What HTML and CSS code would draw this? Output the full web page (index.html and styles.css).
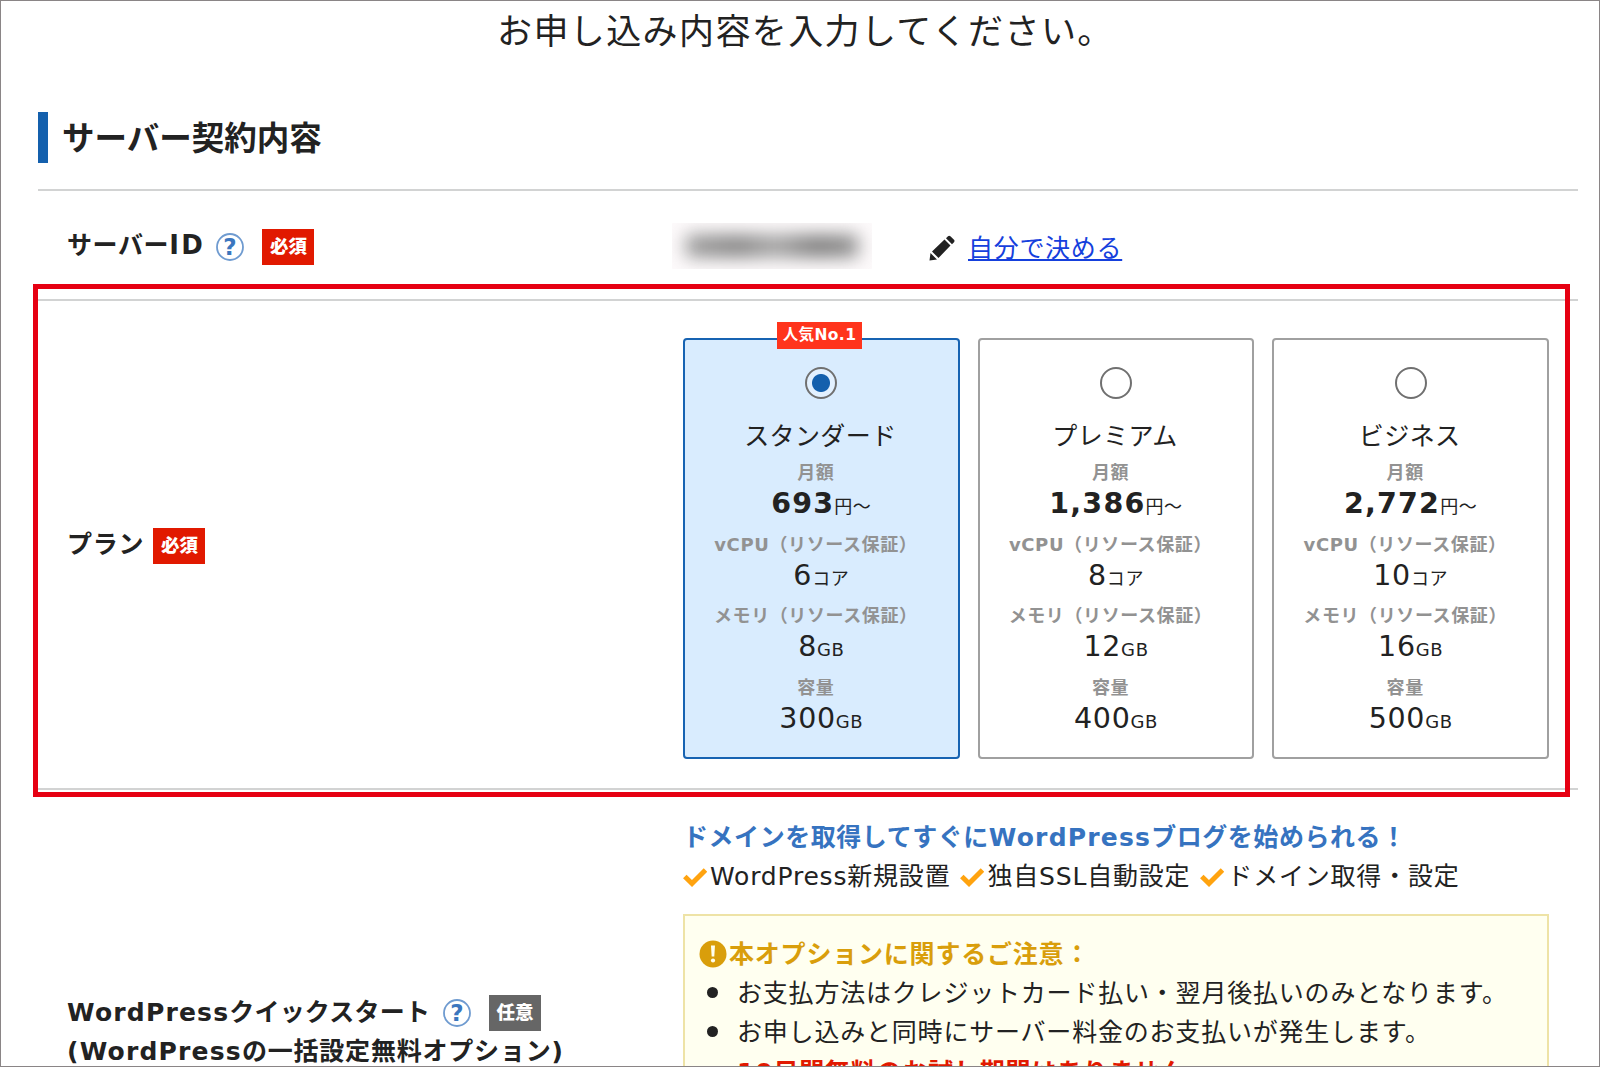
FILE: index.html
```html
<!DOCTYPE html>
<html lang="ja">
<head>
<meta charset="utf-8">
<title>お申し込み内容</title>
<link rel="stylesheet" href="styles.css">
</head>
<body>
<main class="page">
  <h1 class="lead">お申し込み内容を入力してください。</h1>
  <h2 class="section-title">サーバー契約内容</h2>

  <div class="row row-id">
    <div class="label"><span class="t-id">サーバー<span class="latin">ID</span></span>
      <svg class="help" viewBox="0 0 30 30"><circle cx="15" cy="15" r="13" fill="#fff" stroke="#6f9bd0" stroke-width="1.8"/><text x="15" y="23" text-anchor="middle">?</text></svg>
      <span class="tag">必須</span>
    </div>
    <div class="field id-field">
      <span class="masked"><i></i></span>
      <svg class="pencil" viewBox="0 0 26 26"><path d="M.5 25.500l1-7.500 6.500 6.500zM3 16.500L15.500 4.500l6 6L9.500 23zM17 3.200L19 1.200q1.200-1 2.400 0l3.600 3.600q1 1.200 0 2.400L23 9.200z" fill="#222"/></svg>
      <a class="link" href="#">自分で決める</a>
    </div>
  </div>

  <div class="row row-plan">
    <div class="label"><span class="t-plan">プラン</span><span class="tag">必須</span></div>
    <div class="field plans">
      <div class="plan selected">
        <span class="popular">人気No.1</span>
        <span class="radio"></span>
        <p class="name">スタンダード</p>
        <dl>
          <dt>月額</dt><dd><b>693</b><small>円～</small></dd>
          <dt>vCPU（リソース保証）</dt><dd>6<small>コア</small></dd>
          <dt>メモリ（リソース保証）</dt><dd>8<small>GB</small></dd>
          <dt>容量</dt><dd>300<small>GB</small></dd>
        </dl>
      </div>
      <div class="plan">
        <span class="radio"></span>
        <p class="name">プレミアム</p>
        <dl>
          <dt>月額</dt><dd><b>1,386</b><small>円～</small></dd>
          <dt>vCPU（リソース保証）</dt><dd>8<small>コア</small></dd>
          <dt>メモリ（リソース保証）</dt><dd>12<small>GB</small></dd>
          <dt>容量</dt><dd>400<small>GB</small></dd>
        </dl>
      </div>
      <div class="plan">
        <span class="radio"></span>
        <p class="name">ビジネス</p>
        <dl>
          <dt>月額</dt><dd><b>2,772</b><small>円～</small></dd>
          <dt>vCPU（リソース保証）</dt><dd>10<small>コア</small></dd>
          <dt>メモリ（リソース保証）</dt><dd>16<small>GB</small></dd>
          <dt>容量</dt><dd>500<small>GB</small></dd>
        </dl>
      </div>
    </div>
  </div>

  <div class="row row-wp">
    <div class="label wp-label">
      <div class="line"><span class="t-wp"><span class="latin">WordPress</span>クイックスタート</span>
        <svg class="help" viewBox="0 0 30 30"><circle cx="15" cy="15" r="13" fill="#fff" stroke="#6f9bd0" stroke-width="1.8"/><text x="15" y="23" text-anchor="middle">?</text></svg>
        <span class="tag optional">任意</span>
      </div>
      <div class="line"><span class="t-wp2"><span class="latin">(WordPress</span>の一括設定無料オプション)</span></div>
    </div>
    <div class="field">
      <p class="catch">ドメインを取得してすぐに<span class="latin">WordPress</span>ブログを始められる！</p>
      <p class="checks">
        <span><svg class="check" viewBox="0 0 24 20"><path d="M1.800 9.500L9 16.500 22.500 3" fill="none" stroke="#ffa30f" stroke-width="5"/></svg>WordPress新規設置</span>
        <span><svg class="check" viewBox="0 0 24 20"><path d="M1.800 9.500L9 16.500 22.500 3" fill="none" stroke="#ffa30f" stroke-width="5"/></svg>独自SSL自動設定</span>
        <span><svg class="check" viewBox="0 0 24 20"><path d="M1.800 9.500L9 16.500 22.500 3" fill="none" stroke="#ffa30f" stroke-width="5"/></svg>ドメイン取得・設定</span>
      </p>
      <div class="notice">
        <p class="notice-title"><svg class="warn" viewBox="0 0 28 28"><circle cx="14" cy="14" r="13.500" fill="#d99e0b"/><path d="M12 5.500h4l-.7 11h-2.600z" fill="#fffff0"/><circle cx="14" cy="20.500" r="2.100" fill="#fffff0"/></svg>本オプションに関するご注意：</p>
        <ul>
          <li>お支払方法はクレジットカード払い・翌月後払いのみとなります。</li>
          <li>お申し込みと同時にサーバー料金のお支払いが発生します。</li>
          <li class="alert">10日間無料のお試し期間はありません</li>
        </ul>
      </div>
    </div>
  </div>
  <div class="highlight"></div>
</main>
</body>
</html>
```

FILE: styles.css
```css
* { box-sizing: border-box; margin: 0; padding: 0; }

body {
  font-family: "DejaVu Sans", "Noto Sans CJK JP", sans-serif;
  font-size: 25px;
  letter-spacing: .8px;
  color: #222;
  background: #fff;
}

.page {
  position: relative;
  height: 1067px;
  overflow: hidden;
  border: 1px solid #8a8586;
  padding: 0 21px 0 37px;
  white-space: nowrap;
}

.lead {
  height: 111px;
  padding: 9px 0 0 459px;
  font-size: 35px;
  font-weight: 400;
  line-height: 44px;
  letter-spacing: 1.4px;
}

.section-title {
  height: 51px;
  margin-bottom: 26px;
  padding: 2px 0 0 14px;
  border-left: 10px solid #1460ad;
  font-size: 32.500px;
  line-height: 51px;
  letter-spacing: 0;
}

.row {
  display: grid;
  grid-template-columns: 645px 866px;
  border-top: 2px solid #d2d3d3;
}

.row-id { height: 110px; align-items: center; }
.row-plan { height: 489px; }
.row-wp { height: 290px; }

.label {
  display: flex;
  align-items: center;
  padding-left: 29px;
  font-weight: 700;
}

.help { width: 30px; height: 30px; flex: none; }
.help text { font: 700 23px "DejaVu Sans", sans-serif; letter-spacing: 0; fill: #3b76be; }

.tag {
  width: 52px;
  height: 36px;
  background: #e11900;
  color: #fff;
  font-size: 18.500px;
  line-height: 36px;
  letter-spacing: 0;
  text-align: center;
  font-weight: 900;
}
.optional { background: #666; }
.latin { letter-spacing: 1.2px; }

.row-id .label { padding-top: 4px; }
.t-id { letter-spacing: .6px; margin-top: -8px; }
.t-id .latin { letter-spacing: 2.500px; font-size: 26px; }
.row-id .help { margin-left: 10px; }
.row-id .tag { margin-left: 17px; }
.t-plan { margin-top: -5px; }
.row-plan .tag { margin: 3px 0 0 9px; }

.id-field { display: flex; align-items: center; padding-top: 2px; }
.masked {
  display: flex;
  align-items: center;
  width: 200px;
  height: 46px;
  margin-left: -11px;
  padding: 0 14px;
  overflow: hidden;
  background: #fdfafb;
}
.masked i { flex: 1; height: 22px; background: linear-gradient(90deg, #999, #7f7f7f 30%, #a0a0a0 52%, #777 76%, #8c8c8c); filter: blur(9px); }
.pencil { width: 26px; height: 26px; margin: 3px 0 0 57px; }
.link {
  margin-left: 13px;
  color: #1540dd;
  letter-spacing: .7px;
  text-decoration: underline;
  text-decoration-thickness: 2px;
  text-underline-offset: 2px;
  text-decoration-skip-ink: none;
}

.plans { display: grid; grid-template-columns: repeat(3, 1fr); gap: 18px; padding-top: 37px; }
.plan {
  position: relative;
  display: flex;
  flex-direction: column;
  align-items: center;
  height: 421px;
  padding-top: 27px;
  border: 2px solid #a0a0a0;
  border-radius: 4px;
}
.selected { border-color: #1763b2; background: #d9ecfe; }
.popular {
  position: absolute;
  top: -18px;
  left: 92px;
  width: 85px;
  height: 27px;
  background: #ff341c;
  color: #fff;
  font-size: 15.500px;
  font-weight: 700;
  line-height: 27px;
  letter-spacing: .4px;
  text-align: center;
}
.radio { width: 32px; height: 32px; border: 2px solid #707070; border-radius: 50%; background: #fff; }
.selected .radio { background: radial-gradient(circle, #1460ad 8.500px, #e3f1ff 9.500px); }
.name { margin: 20px 2px 6px 0; line-height: 36px; letter-spacing: .4px; }

dl { text-align: center; }
dt {
  height: 24px;
  margin-right: 11px;
  color: #929292;
  font-size: 18px;
  font-weight: 700;
  line-height: 24px;
  letter-spacing: .6px;
}
dd { height: 47.600px; font-size: 28.500px; line-height: 37px; letter-spacing: .7px; }
dd b { letter-spacing: 1.2px; }
small { font-size: 18px; letter-spacing: .6px; }

.wp-label { display: block; padding-top: 200px; }
.line { display: flex; align-items: center; height: 39px; }
.t-wp { letter-spacing: .2px; }
.t-wp2 { letter-spacing: .8px; }
.row-wp .help { margin: 6px 0 0 12px; }
.row-wp .tag { margin: 7px 0 0 17px; }

.catch { margin-top: 28px; color: #3673c0; font-weight: 700; line-height: 39px; letter-spacing: .55px; }
.checks { display: flex; gap: 10px; height: 39px; line-height: 41px; letter-spacing: .8px; }
.checks span { display: flex; align-items: center; }
.check { width: 24px; height: 20px; margin-right: 3px; }

.notice {
  height: 200px;
  margin-top: 18px;
  padding: 16px 14px;
  background: #fffff0;
  border: 2px solid #eee3a6;
}
.notice-title { display: flex; align-items: center; height: 39px; color: #d99e0b; font-weight: 700; }
.warn { width: 28px; height: 28px; margin: 4px 2px 0 0; }
ul { list-style: none; }
li { display: flex; align-items: center; height: 39.500px; }
li::before { content: ""; width: 11px; height: 11px; margin: 3px 19px 0 8px; border-radius: 50%; background: #222; }
.alert { color: #e11900; font-weight: 700; }
.alert::before { background: none; }

.highlight {
  position: absolute;
  top: 283px;
  left: 32px;
  width: 1537px;
  height: 513px;
  border: 5px solid #e60012;
}
```
